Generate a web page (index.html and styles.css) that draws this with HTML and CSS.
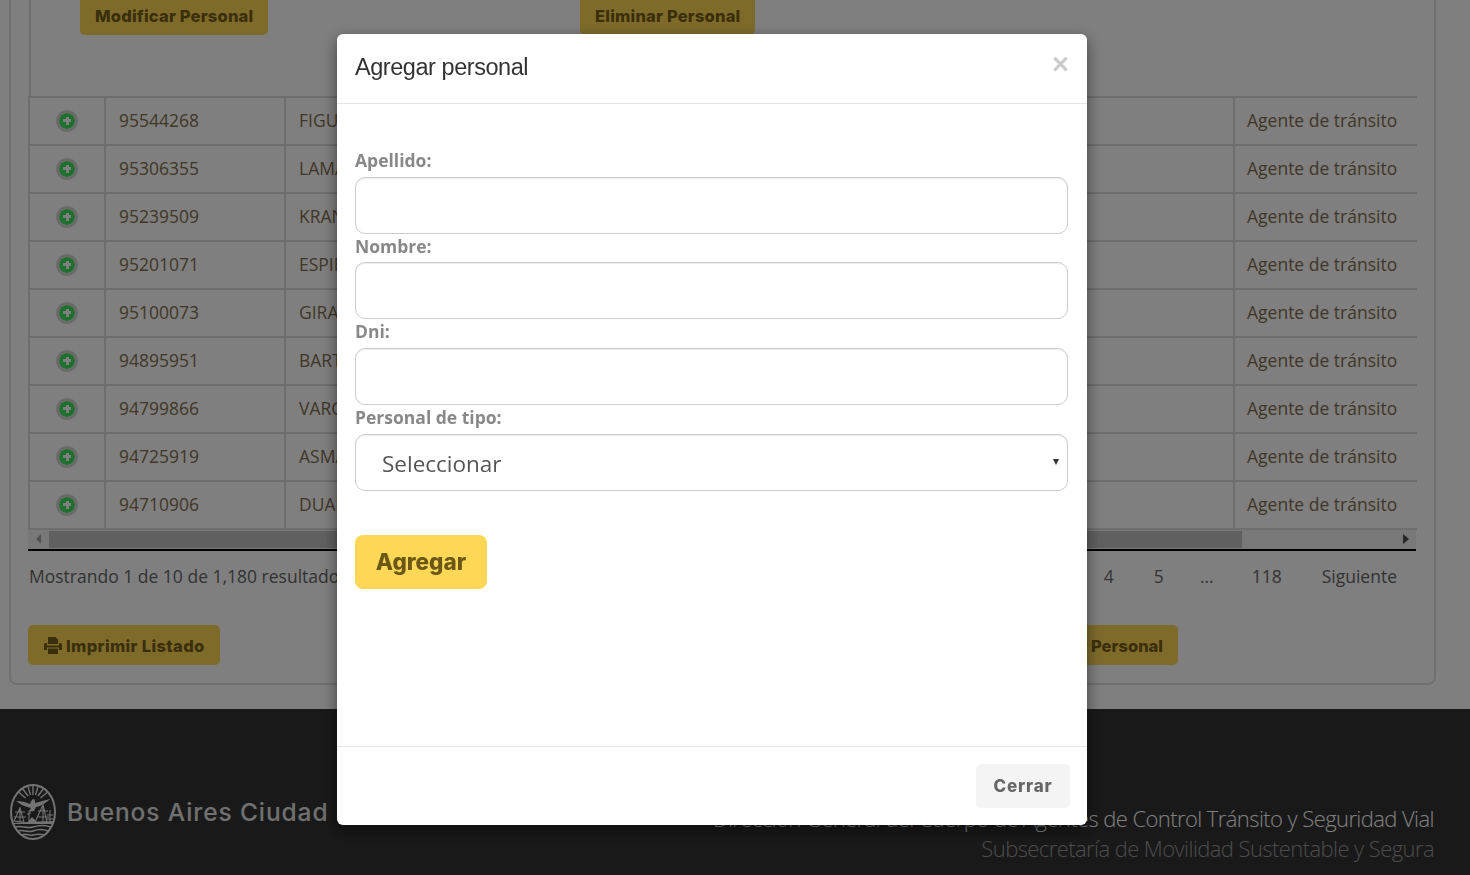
FILE: index.html
```html
<!DOCTYPE html>
<html lang="es">
<head>
<meta charset="utf-8">
<title>Personal</title>
<link rel="stylesheet" href="styles.css">
</head>
<body>
<main class="page">
  <section class="panel">
    <div class="box">
      <div class="top-actions">
        <a class="btn btn-top">Modificar Personal</a>
        <a class="btn btn-top">Eliminar Personal</a>
      </div>
      <table class="grid">
        <colgroup><col class="c1"><col class="c2"><col class="c3"><col class="c4"></colgroup>
        <tbody>
          <tr><td class="ic"><span class="add"></span></td><td>95544268</td><td>FIGUE</td><td>Agente de tránsito</td></tr>
          <tr><td class="ic"><span class="add"></span></td><td>95306355</td><td>LAMAS</td><td>Agente de tránsito</td></tr>
          <tr><td class="ic"><span class="add"></span></td><td>95239509</td><td>KRANZ</td><td>Agente de tránsito</td></tr>
          <tr><td class="ic"><span class="add"></span></td><td>95201071</td><td>ESPIN</td><td>Agente de tránsito</td></tr>
          <tr><td class="ic"><span class="add"></span></td><td>95100073</td><td>GIRAL</td><td>Agente de tránsito</td></tr>
          <tr><td class="ic"><span class="add"></span></td><td>94895951</td><td>BARTO</td><td>Agente de tránsito</td></tr>
          <tr><td class="ic"><span class="add"></span></td><td>94799866</td><td>VARGA</td><td>Agente de tránsito</td></tr>
          <tr><td class="ic"><span class="add"></span></td><td>94725919</td><td>ASMAT</td><td>Agente de tránsito</td></tr>
          <tr><td class="ic"><span class="add"></span></td><td>94710906</td><td>DUART</td><td>Agente de tránsito</td></tr>
        </tbody>
      </table>
      <div class="hscroll">
        <span class="arrow arrow-l"></span>
        <span class="thumb"></span>
        <span class="arrow arrow-r"></span>
      </div>
      <div class="pager-row">
        <span class="info">Mostrando 1 de 10 de 1,180 resultados</span>
        <nav class="pager">
          <a>1</a><a>2</a><a>3</a><a>4</a><a>5</a><a class="gap">...</a><a>118</a><a>Siguiente</a>
        </nav>
      </div>
    </div>
    <div class="bottom-actions">
      <a class="btn btn-print">
        <svg class="print" viewBox="0 0 18 17" aria-hidden="true"><path d="M4 0h7.500L14 2.500V7H4zM1.500 6H3v2.500h12V6h1.500A1.500 1.500 0 0 1 18 7.500V13h-3v-2.500H3V13H0V7.500A1.500 1.500 0 0 1 1.500 6zM4 11.500h10V17H4z"/></svg>
        Imprimir Listado
      </a>
      <a class="btn btn-add">Agregar Personal</a>
    </div>
  </section>
</main>
<footer class="foot">
  <div class="brand">
    <svg class="seal" viewBox="0 0 46 56" aria-hidden="true">
      <ellipse cx="23" cy="28" rx="22" ry="27" fill="none" stroke="currentColor" stroke-width="2"/>
      <path d="M23 11V2M20.500 11 18 2.500M25.500 11 28 2.500M18 12 12.500 4.500M28 12l5.500-7.500M15.500 14 8.500 8M30.500 14l7-6" fill="none" stroke="currentColor" stroke-width="1.400"/>
      <path d="M6 17c5 0 10 1 14 3 1-3 2-5 4-5 1 1 1 3 1 4 5-1 10-3 15-4-3 3-8 7-14 8l-2 4-6 1 3-4c-5-1-10-3-15-7z" fill="currentColor"/>
      <path d="M10 23v15M5 28h10M4 33h12M4 37l6-13 4 14zM33 21v17M28 27h10M27 33h12M25 38l8-17 4 17zM40 26v12M37 31h6M36 35h8M19 28v10M17 30l4-1" fill="none" stroke="currentColor" stroke-width="1.100"/>
      <path d="M3 39l15-1 4-5 5 5 16-1-1 3H4z" fill="currentColor"/>
      <path d="M5 43c6-2 12 2 18 0s12-2 18 0M8 47c5-2 10 2 15 0s10-2 15 0M12 51c4-2 7 1 11 0s7-1 11 0" fill="none" stroke="currentColor" stroke-width="1.600"/>
    </svg>
    <span class="brand-name">Buenos Aires Ciudad</span>
  </div>
  <div class="foot-text">
    <p class="foot-a">Dirección General del Cuerpo de Agentes de Control Tránsito y Seguridad Vial</p>
    <p class="foot-b">Subsecretaría de Movilidad Sustentable y Segura</p>
  </div>
</footer>
<div class="backdrop"></div>
<div class="modal" role="dialog">
  <header class="modal-head">
    <h4 class="modal-title">Agregar personal</h4>
    <span class="close">×</span>
  </header>
  <form class="modal-body">
    <label class="lab">Apellido:</label>
    <input class="ctl" type="text">
    <label class="lab">Nombre:</label>
    <input class="ctl" type="text">
    <label class="lab">Dni:</label>
    <input class="ctl" type="text">
    <label class="lab">Personal de tipo:</label>
    <div class="sel-wrap">
      <select class="ctl sel"><option>Seleccionar</option></select>
      <i class="caret"></i>
    </div>
    <button class="btn btn-save" type="button">Agregar</button>
  </form>
  <footer class="modal-foot">
    <button class="btn btn-close" type="button">Cerrar</button>
  </footer>
</div>
</body>
</html>
```
FILE: styles.css
```css
* { box-sizing: border-box; }
html, body { margin: 0; height: 875px; overflow: hidden; }
body { background: #fff; font-family: "Open Sans", sans-serif; color: #666; }

.page {
  height: 709px;
  overflow: hidden;
  display: flex;
  flex-direction: column;
  justify-content: flex-end;
  padding: 0 34px 24px 9px;
}
.panel {
  flex: none;
  border: 2px solid #e0e0e0;
  border-top: 0;
  border-radius: 0 0 8px 8px;
  padding: 0 18px 18px 17px;
}
.box { width: 1388px; }
.btn {
  display: inline-block;
  font-family: "Inter", sans-serif;
  font-weight: 800;
  border: 0;
  border-radius: 5px;
  background: #fdd755;
  color: #755f19;
}
.top-actions {
  display: grid;
  grid-template-columns: 500px auto;
  justify-content: start;
  padding: 0 0 61px 49px;
  border-left: 2px solid #ddd;
  margin-left: 1px;
}
.btn-top { height: 40px; padding: 0 15px; font-size: 16.500px; letter-spacing: .2px; line-height: 42px; white-space: nowrap; justify-self: start; }

.grid { width: 1388px; border-collapse: collapse; table-layout: fixed; font-size: 17.500px; color: #816e4e; }
.c1 { width: 76px; }
.c2 { width: 180px; }
.c3 { width: 949px; }
.c4 { width: 183px; }
.grid td { height: 48px; padding: 0 13px 2px; border: 2px solid #ddd; white-space: nowrap; }
.grid tr td:last-child { border-right: 0; padding-left: 12px; }
.grid .ic { padding: 0; }
.add {
  display: block;
  width: 22px;
  height: 22px;
  margin: -1px auto 0;
  border-radius: 50%;
  background:
    linear-gradient(#fff, #fff) center / 8px 3px no-repeat,
    linear-gradient(#fff, #fff) center / 3px 8px no-repeat,
    #3ee05a;
  background-clip: padding-box;
  border: 3px solid #d4d4d4;
}

.hscroll { height: 21px; display: flex; align-items: center; border-bottom: 2px solid #000; padding: 0 7px 1px 8px; background: #f1f1f1; }
.thumb { height: 17px; width: 1193px; margin-left: 8px; background: #c1c1c1; }
.arrow { width: 0; height: 0; border-style: solid; border-color: transparent; border-width: 5px 0; }
.arrow-l { border-right: 5px solid #a3a3a3; }
.arrow-r { border-left: 6px solid #505050; margin-left: auto; }

.pager-row { display: flex; justify-content: space-between; align-items: center; height: 53px; padding: 0 0 3px 1px; font-size: 17.500px; }
.pager { display: flex; margin-right: -1px; }
.pager a { padding: 0 20px; }
.pager .gap { padding: 0 18px 0 16px; }

.bottom-actions { display: flex; justify-content: space-between; padding: 21px 238px 0 0; }
.btn-print { height: 40px; padding: 1px 15px 0 16px; font-size: 16.500px; letter-spacing: .35px; line-height: 40px; white-space: nowrap; display: flex; align-items: center; gap: 4px; }
.btn-add { height: 40px; padding: 0 15px; font-size: 16.500px; line-height: 42px; white-space: nowrap; }
.print { width: 18px; height: 17px; fill: currentColor; }

.foot { height: 166px; background: #333; display: flex; justify-content: space-between; padding: 0 36px 0 10px; }
.brand { display: flex; align-items: center; gap: 11px; color: #e6e6e6; padding-top: 39px; height: 166px; }
.seal { width: 46px; height: 56px; }
.brand-name { font-family: "Inter", sans-serif; font-weight: 500; font-size: 24.500px; letter-spacing: .9px; color: #e0e0e0; white-space: nowrap; }
.foot-text { padding-top: 94px; text-align: right; font-size: 22px; font-weight: 300; letter-spacing: -.58px; line-height: 30px; }
.foot-text p { margin: 0; white-space: nowrap; }
.foot-a { color: #fff; }
.foot-b { color: #999; }

.backdrop { position: fixed; inset: 0; background: rgba(0, 0, 0, .5); }
.modal {
  position: fixed;
  left: 337px;
  top: 34px;
  width: 750px;
  height: 791px;
  background: #fff;
  border-radius: 6px;
  box-shadow: 0 5px 15px rgba(0, 0, 0, .5);
  display: flex;
  flex-direction: column;
}
.modal-head { height: 70px; flex: none; border-bottom: 1px solid #e5e5e5; position: relative; padding: 0 18px; }
.modal-title { margin: 18px 0 0; font-family: "Liberation Sans", Arial, sans-serif; font-weight: 400; font-size: 23.500px; letter-spacing: -.45px; line-height: 30px; color: #333; }
.close { position: absolute; right: 18px; top: 15px; font-family: "Liberation Sans", Arial, sans-serif; font-size: 29px; font-weight: 700; line-height: 30px; color: #ccc; }
.modal-body { flex: 1; padding: 44px 18px 0; display: flex; flex-direction: column; align-items: flex-start; }
.lab { display: block; height: 28.700px; line-height: 24px; font-size: 17.500px; font-weight: 700; color: #888; }
.ctl { display: block; width: 713px; height: 57px; flex: none; border: 1px solid #ccc; border-radius: 10px; box-shadow: inset 0 1px 1px rgba(0, 0, 0, .075); background: #fff; padding: 0 26px; font: inherit; }
.sel-wrap { position: relative; }
.sel { appearance: none; font-size: 22.500px; color: #555; padding-top: 2px; }
.caret { position: absolute; right: 9px; top: 25px; width: 0; height: 0; border: 3.500px solid transparent; border-top: 6px solid #333; border-bottom: 0; }
.btn-save { margin-top: 44px; width: 132px; height: 54px; padding: 0; border-radius: 8px; font-size: 22.500px; color: #6b5716; }
.modal-foot { height: 79px; flex: none; border-top: 1px solid #e5e5e5; padding: 17px 17px 0 0; display: flex; justify-content: flex-end; align-items: flex-start; }
.btn-close { width: 94px; height: 44px; padding: 0; background: #f4f4f4; color: #666; font-size: 17px; letter-spacing: .8px; }
```
